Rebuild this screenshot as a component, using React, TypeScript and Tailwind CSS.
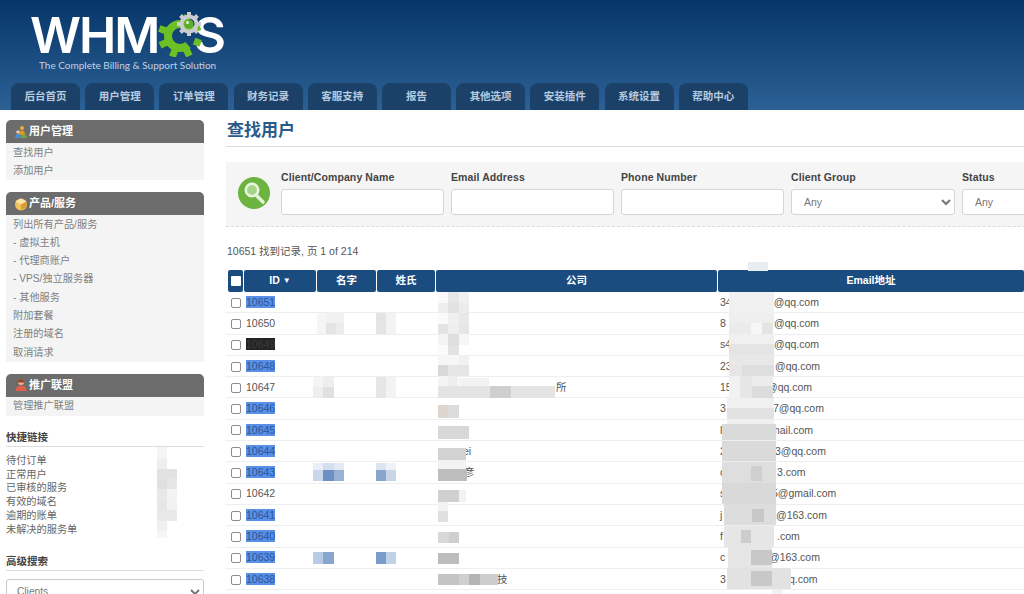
const cjk = { fontFamily: '"Liberation Sans", "Noto Sans CJK SC", sans-serif' }

const tabs = ['后台首页', '用户管理', '订单管理', '财务记录', '客服支持', '报告', '其他选项', '安装插件', '系统设置', '帮助中心']
const quickLinks = ['待付订单', '正常用户', '已审核的服务', '有效的域名', '逾期的账单', '未解决的服务单']

const rows = [
  { id: 10651, mark: 'blue', pre: '34', gap: 48, post: '3@qq.com' },
  { id: 10650, mark: '', pre: '8', gap: 54, post: '@qq.com' },
  { id: 10649, mark: 'black', pre: 's4', gap: 54, post: '@qq.com' },
  { id: 10648, mark: 'blue', pre: '23', gap: 55, post: '@qq.com' },
  { id: 10647, mark: '', pre: '15', gap: 47, post: '@qq.com' },
  { id: 10646, mark: 'blue', pre: '3', gap: 53, post: '7@qq.com' },
  { id: 10645, mark: 'blue', pre: 'l', gap: 51, post: 'mail.com' },
  { id: 10644, mark: 'blue', pre: '2', gap: 55, post: '3@qq.com' },
  { id: 10643, mark: 'blue', pre: 'c', gap: 57, post: '3.com' },
  { id: 10642, mark: '', pre: 's', gap: 52, post: '5@gmail.com' },
  { id: 10641, mark: 'blue', pre: 'j', gap: 56, post: '@163.com' },
  { id: 10640, mark: 'blue', pre: 'f', gap: 57, post: '.com' },
  { id: 10639, mark: 'blue', pre: 'c', gap: 49, post: '@163.com' },
  { id: 10638, mark: 'blue', pre: '3', gap: 69, post: 'q.com' },
]

// [x, y, w, h, colour] blurred patches that hide customer data
const patches: [number, number, number, number, string][] = [
  // sidebar
  [157, 447, 10, 12, '#f4f6f6'], [157, 459, 10, 10, '#eeeeee'], [157, 469, 20, 10, '#e2e2e2'], [157, 479, 10, 10, '#e0e0e0'], [167, 479, 10, 10, '#e6e6e6'],
  [157, 489, 10, 11, '#e8e8e8'], [167, 489, 10, 11, '#f3f3f3'], [157, 500, 10, 10, '#e6e6e6'], [167, 500, 10, 10, '#f2f2f2'], [157, 510, 20, 11, '#e9e9e9'],
  [157, 521, 10, 10, '#f0f0f0'], [157, 531, 10, 7, '#f6f6f6'],
  // names
  [317, 313, 9, 21, '#f6f6f6'], [326, 313, 18, 10, '#f1f1f1'], [326, 323, 10, 11, '#e4e4e4'], [336, 323, 8, 11, '#ececec'], [376, 313, 10, 21, '#e4e4e4'], [386, 313, 10, 21, '#f3f3f3'],
  [313, 377, 10, 10, '#f5f5f5'], [323, 377, 11, 10, '#eeeeee'], [313, 387, 10, 11, '#eeeeee'], [323, 387, 11, 11, '#e0e0e0'], [376, 377, 10, 21, '#e6e6e6'], [386, 377, 10, 21, '#f3f3f3'],
  [313, 463, 10, 7, '#e9eef7'], [323, 463, 11, 7, '#d3dff0'], [334, 463, 10, 7, '#e2e9f4'], [313, 470, 10, 11, '#c8d5ea'], [323, 470, 11, 11, '#6c8fc6'], [334, 470, 10, 11, '#9ab1d6'],
  [376, 463, 10, 7, '#dbe5f2'], [386, 463, 10, 7, '#eef2f8'], [376, 470, 10, 11, '#8aa5cc'], [386, 470, 10, 11, '#c9d6ea'],
  [313, 552, 10, 12, '#b8cbe4'], [323, 552, 11, 12, '#88a6cf'], [376, 552, 10, 12, '#7b9bcb'], [386, 552, 10, 12, '#c0d2e8'],
  // company
  [438, 292, 10, 11, '#fafafa'], [448, 292, 11, 11, '#e6e6e6'], [459, 292, 10, 11, '#f0f0f0'], [438, 303, 10, 10, '#eeeeee'], [448, 303, 11, 10, '#e2e2e2'], [459, 303, 10, 10, '#ececec'],
  [438, 313, 10, 11, '#fafafa'], [448, 313, 11, 11, '#f0f0f0'], [459, 313, 10, 11, '#e8e8e8'], [438, 324, 10, 10, '#e4e4e4'], [448, 324, 11, 10, '#eeeeee'], [459, 324, 10, 10, '#e6e6e6'],
  [438, 334, 10, 11, '#f4f4f4'], [448, 334, 11, 11, '#dedede'], [459, 334, 10, 11, '#f6f6f6'], [448, 345, 11, 10, '#e2e2e2'], [438, 345, 10, 10, '#fbfbfb'],
  [438, 355, 21, 10, '#f6f6f6'], [459, 355, 10, 10, '#f1f1f1'], [438, 365, 10, 11, '#d8d8d8'], [448, 365, 21, 11, '#e6e6e6'],
  [438, 376, 10, 11, '#f4f4f4'], [448, 376, 10, 11, '#eeeeee'], [459, 378, 30, 9, '#f3f3f3'], [438, 386, 52, 12, '#e4e4e4'], [490, 386, 21, 12, '#cfcfcf'], [511, 386, 44, 12, '#e4e4e4'],
  [438, 405, 10, 13, '#dcd6cf'], [448, 405, 11, 13, '#dcdcdc'],
  [438, 426, 31, 13, '#d8d8d8'],
  [438, 448, 28, 12, '#d2d2d2'], [438, 460, 28, 9, '#f2f2f2'],
  [438, 469, 29, 12, '#bdbdbd'],
  [438, 490, 21, 12, '#d0d0d0'], [459, 490, 7, 12, '#f2f2f2'],
  [438, 502, 10, 9, '#f3f3f3'], [438, 511, 10, 11, '#e0e0e0'],
  [438, 532, 11, 11, '#d8d8d8'], [449, 532, 10, 11, '#cfcfcf'],
  [438, 553, 21, 11, '#bdbdbd'],
  [438, 574, 21, 11, '#c4c4c4'], [459, 574, 10, 11, '#cfcfcf'], [469, 574, 11, 11, '#b4b4b4'], [480, 574, 18, 11, '#cdcdcd'],
  // email
  [748, 262, 20, 9, '#e8edf1'],
  [729, 292, 45, 21, '#f1f1f1'], [729, 313, 45, 10, '#efefef'], [729, 323, 22, 11, '#ebebeb'], [751, 323, 11, 11, '#f6f6f6'], [762, 323, 11, 11, '#e4e4e4'],
  [729, 334, 45, 10, '#f0f0f0'], [729, 344, 45, 11, '#e4e4e4'], [729, 355, 45, 10, '#e8e8e8'], [729, 365, 13, 11, '#e6e6e6'], [742, 365, 32, 11, '#dedede'],
  [729, 376, 11, 22, '#f2f2f2'], [740, 376, 12, 22, '#e6e6e6'], [752, 376, 21, 10, '#ececec'], [752, 386, 21, 12, '#dcdcdc'],
  [727, 398, 47, 10, '#f0f0f0'], [727, 408, 47, 11, '#e2e2e2'], [727, 419, 47, 5, '#f0f0f0'],
  [722, 424, 54, 16, '#dadada'],
  [722, 441, 54, 20, '#dadada'],
  [722, 462, 54, 21, '#dedede'], [751, 466, 11, 15, '#cfcfcf'],
  [722, 483, 54, 21, '#d9d9d9'],
  [724, 504, 52, 21, '#dddddd'], [752, 509, 12, 13, '#c8c8c8'],
  [724, 526, 50, 21, '#e6e6e6'], [741, 530, 10, 13, '#cdcdcd'],
  [728, 547, 44, 21, '#e6e6e6'], [751, 550, 21, 15, '#c8c8c8'],
  [727, 568, 64, 21, '#e2e2e2'], [751, 571, 21, 15, '#c8c8c8'],
  [772, 589, 11, 5, '#f0f0f0'],
]

function Logo() {
  const teeth = [20, 65, 110, 155, 200, 245, 290]
  const gray = [0, 45, 90, 135, 180, 225, 270, 315]
  return (
    <div className="ml-[30px] w-[200px]">
      <div className="flex h-[44px] items-center leading-[44px] text-white" style={{ fontFamily: 'Inter, sans-serif' }}>
        <span className="text-[50px] font-semibold tracking-[-2px]">WHM</span>
        <svg className="h-[46px] w-[44px] shrink-0 -translate-y-[1px]" viewBox="0 0 44 46" aria-hidden>
          <circle cx="22" cy="25" r="12" fill="none" stroke="#6cc024" strokeWidth="8" strokeDasharray="60 15.4" strokeDashoffset="-10" />
          {teeth.map((a) => (
            <rect key={a} x="18.5" y="3" width="7" height="7" fill="#6cc024" transform={`rotate(${a} 22 25)`} />
          ))}
          {gray.map((a) => (
            <rect key={a} x="29" y="1" width="4" height="5" fill="#c9cdd0" transform={`rotate(${a} 31 13)`} />
          ))}
          <circle cx="31" cy="13" r="7.5" fill="none" stroke="#c9cdd0" strokeWidth="4" />
          <circle cx="31" cy="13" r="4.5" fill="#5fae2a" />
          <circle cx="29.5" cy="11.5" r="1.5" fill="#e8f5da" />
        </svg>
        <span className="-ml-[9px] text-[50px] font-semibold">S</span>
      </div>
      <div className="mt-[3px] ml-[9px] text-[10px] leading-none whitespace-nowrap text-[#c3d2e2]" style={{ fontFamily: 'Lato, sans-serif' }}>
        The Complete Billing &amp; Support Solution
      </div>
    </div>
  )
}

function BoxIcon({ kind }: { kind: string }) {
  if (kind === 'users') {
    return (
      <svg className="h-[14px] w-[14px]" viewBox="0 0 14 14" aria-hidden>
        <circle cx="8" cy="3" r="2" fill="#e8b23a" />
        <path d="M5 10 Q5 5.5 8 5.5 Q11 5.5 11 10 Z" fill="#d99a2b" />
        <circle cx="4" cy="7" r="1.8" fill="#f0c9a0" />
        <path d="M1 13 Q1 9 4 9 Q7 9 7 13 Z" fill="#4a8fd0" />
        <path d="M7 13 Q7 9.5 10 9.5 Q13 9.5 13 13 Z" fill="#6ba84a" />
      </svg>
    )
  }
  if (kind === 'box') {
    return (
      <svg className="h-[14px] w-[14px]" viewBox="0 0 14 14" aria-hidden>
        <circle cx="7" cy="7.5" r="6" fill="#f2c260" />
        <path d="M7 1.5 L12.5 4.5 L7 7.5 L1.5 4.5 Z" fill="#fbe3a8" />
        <path d="M7 7.5 L12.5 4.5 V10 L7 13 Z" fill="#dc9a30" />
      </svg>
    )
  }
  return (
    <svg className="h-[14px] w-[14px]" viewBox="0 0 14 14" aria-hidden>
      <circle cx="7" cy="4" r="3" fill="#f1b48e" />
      <path d="M7 1 Q3.5 1 4 4.5 L10 4.5 Q10.5 1 7 1 Z" fill="#8a4a2a" />
      <path d="M1.5 13 Q1.5 7.5 7 7.5 Q12.5 7.5 12.5 13 Z" fill="#e0604c" />
    </svg>
  )
}

function SideBox({ icon, title, items, className }: { icon: string; title: string; items: string[]; className: string }) {
  return (
    <div className={className}>
      <div className="flex h-[23px] items-center gap-[1px] rounded-t-[5px] bg-[#6c6c6c] pl-[8px] text-[11px] font-bold text-white">
        <BoxIcon kind={icon} />
        {title}
      </div>
      <div className="bg-[#f4f4f4] pb-[0.5px]">
        {items.map((item) => (
          <div key={item} className="flex h-[18.3px] items-center pl-[7px] text-[10.2px] text-[#808080]">
            {item}
          </div>
        ))}
      </div>
    </div>
  )
}

function Sidebar() {
  return (
    <aside className="ml-[6px] w-[198px] shrink-0 pt-[10px]">
      <SideBox className="" icon="users" title="用户管理" items={['查找用户', '添加用户']} />
      <SideBox
        className="mt-[12px]"
        icon="box"
        title="产品/服务"
        items={['列出所有产品/服务', '- 虚拟主机', '- 代理商账户', '- VPS/独立服务器', '- 其他服务', '附加套餐', '注册的域名', '取消请求']}
      />
      <SideBox className="mt-[12px]" icon="user" title="推广联盟" items={['管理推广联盟']} />
      <h3 className="mt-[14px] border-b border-[#ddd] pb-[2px] text-[10.5px] leading-[14px] font-bold text-[#444]">快捷链接</h3>
      <div className="mt-[7px]">
        {quickLinks.map((link) => (
          <div key={link} className="h-[13.8px] text-[10.2px] leading-[13.8px] text-[#666]">
            {link}
          </div>
        ))}
      </div>
      <h3 className="mt-[17px] border-b border-[#ddd] pb-[2px] text-[10.5px] leading-[14px] font-bold text-[#444]">高级搜索</h3>
      <select className="mt-[8px] h-[26px] w-full rounded-[3px] border border-[#ccc] bg-white pl-[6px] text-[10.2px] text-[#777]">
        <option>Clients</option>
      </select>
    </aside>
  )
}

function Field({ label, select, width }: { label: string; select?: boolean; width: string }) {
  const box = `h-[26px] rounded-[3px] border border-[#d5d5d5] bg-white ${width}`
  return (
    <div className="shrink-0">
      <div className="mb-[6px] h-[12px] text-[10.5px] leading-[12px] font-bold tracking-[0.1px] text-[#444]">{label}</div>
      {select ? (
        <select className={`${box} pl-[8px] text-[10.5px] text-[#777]`}>
          <option>Any</option>
        </select>
      ) : (
        <input className={`${box} block`} />
      )}
    </div>
  )
}

function SearchPanel() {
  return (
    <div className="mt-[15px] flex h-[65px] border-b border-dashed border-[#ddd] bg-[#f5f5f5] pt-[9px]">
      <svg className="mt-[6px] ml-[12px] h-[32px] w-[32px] shrink-0" viewBox="0 0 32 32" aria-hidden>
        <circle cx="16" cy="16" r="16" fill="#6cb33f" />
        <path d="M19 19 L25 25" stroke="#e4f2d8" strokeWidth="3.6" strokeLinecap="round" />
        <circle cx="14" cy="13" r="6.2" fill="#a5d487" stroke="#e9f5e0" strokeWidth="2.6" />
      </svg>
      <div className="ml-[11px] flex gap-[7px]">
        <Field label="Client/Company Name" width="w-[163px]" />
        <Field label="Email Address" width="w-[163px]" />
        <Field label="Phone Number" width="w-[163px]" />
        <Field label="Client Group" select width="w-[164px]" />
        <Field label="Status" select width="w-[163px]" />
      </div>
    </div>
  )
}

const columns = 'grid grid-cols-[15px_72px_59px_58px_281px_306px] gap-x-[1px]'

function ClientTable() {
  return (
    <div className="mt-[12px] ml-[2px]">
      <div className={`${columns} h-[22px] text-[10.5px] font-bold text-white`}>
        <div className="flex items-center justify-center rounded-[2px] bg-[#1a4c80]">
          <input type="checkbox" className="h-[10px] w-[10px] appearance-none rounded-[1px] bg-white" />
        </div>
        <div className="flex items-center justify-center gap-[3px] rounded-[2px] bg-[#1a4c80]">
          ID
          <span className="text-[8px]">▼</span>
        </div>
        {['名字', '姓氏', '公司', 'Email地址'].map((h) => (
          <div key={h} className="flex items-center justify-center rounded-[2px] bg-[#1a4c80]">
            {h}
          </div>
        ))}
      </div>
      {rows.map((row) => (
        <div key={row.id} className={`${columns} -ml-[2px] h-[21.3px] items-center border-b border-[#eee] pt-[1px] pl-[2px] text-[10.5px] text-[#555]`}>
          <div className="flex justify-center">
            <input type="checkbox" className="h-[10px] w-[10px] appearance-none rounded-[2px] border border-[#8c8c8c] bg-white" />
          </div>
          <div className="pl-[2px]">
            <span
              className={
                row.mark === 'blue'
                  ? 'bg-[#5990e6] text-[#2a5596]'
                  : row.mark === 'black'
                    ? 'bg-[#242424] text-[#3c3c3c]'
                    : ''
              }
            >
              {row.id}
            </span>
          </div>
          <div />
          <div />
          <div>
            {row.id === 10647 ? <span className="ml-[120px]">所</span> : null}
            {row.id === 10638 ? <span className="ml-[61px]">技</span> : null}
            {row.id === 10643 ? <span className="ml-[28px]">彦</span> : null}
            {row.id === 10644 ? <span className="ml-[27px]">ei</span> : null}
          </div>
          <div className="flex pl-[2px] whitespace-nowrap">
            <span className="inline-block shrink-0" style={{ width: row.gap }}>
              {row.pre}
            </span>
            {row.post}
          </div>
        </div>
      ))}
    </div>
  )
}

export default function App() {
  return (
    <div className="relative h-[594px] w-[1024px] overflow-hidden bg-white" style={cjk}>
      <header className="flex h-[110px] flex-col bg-gradient-to-b from-[#063669] to-[#2c6195] pt-[13px]">
        <Logo />
        <nav className="mt-auto ml-[11px] flex gap-[5.2px]">
          {tabs.map((tab) => (
            <div key={tab} className="flex h-[27px] w-[69px] items-center justify-center rounded-t-[8px] bg-[#1c4169] text-[10.5px] font-bold text-[#b7cbdf]">
              {tab}
            </div>
          ))}
        </nav>
      </header>
      <div className="flex">
        <Sidebar />
        <main className="ml-[22px] w-[900px] shrink-0">
          <h1 className="mt-[10px] h-[27px] border-b border-[#ddd] pl-[1px] text-[17px] leading-[22px] font-bold text-[#2a5a8a]">查找用户</h1>
          <SearchPanel />
          <p className="mt-[17px] h-[14px] pl-[1px] text-[10.5px] leading-[14px] text-[#555]">10651 找到记录, 页 1 of 214</p>
          <ClientTable />
        </main>
      </div>
      {patches.map(([x, y, w, h, c], i) => (
        <div key={i} className="absolute blur-[0.6px]" style={{ left: x, top: y, width: w, height: h, background: c }} aria-hidden />
      ))}
    </div>
  )
}
